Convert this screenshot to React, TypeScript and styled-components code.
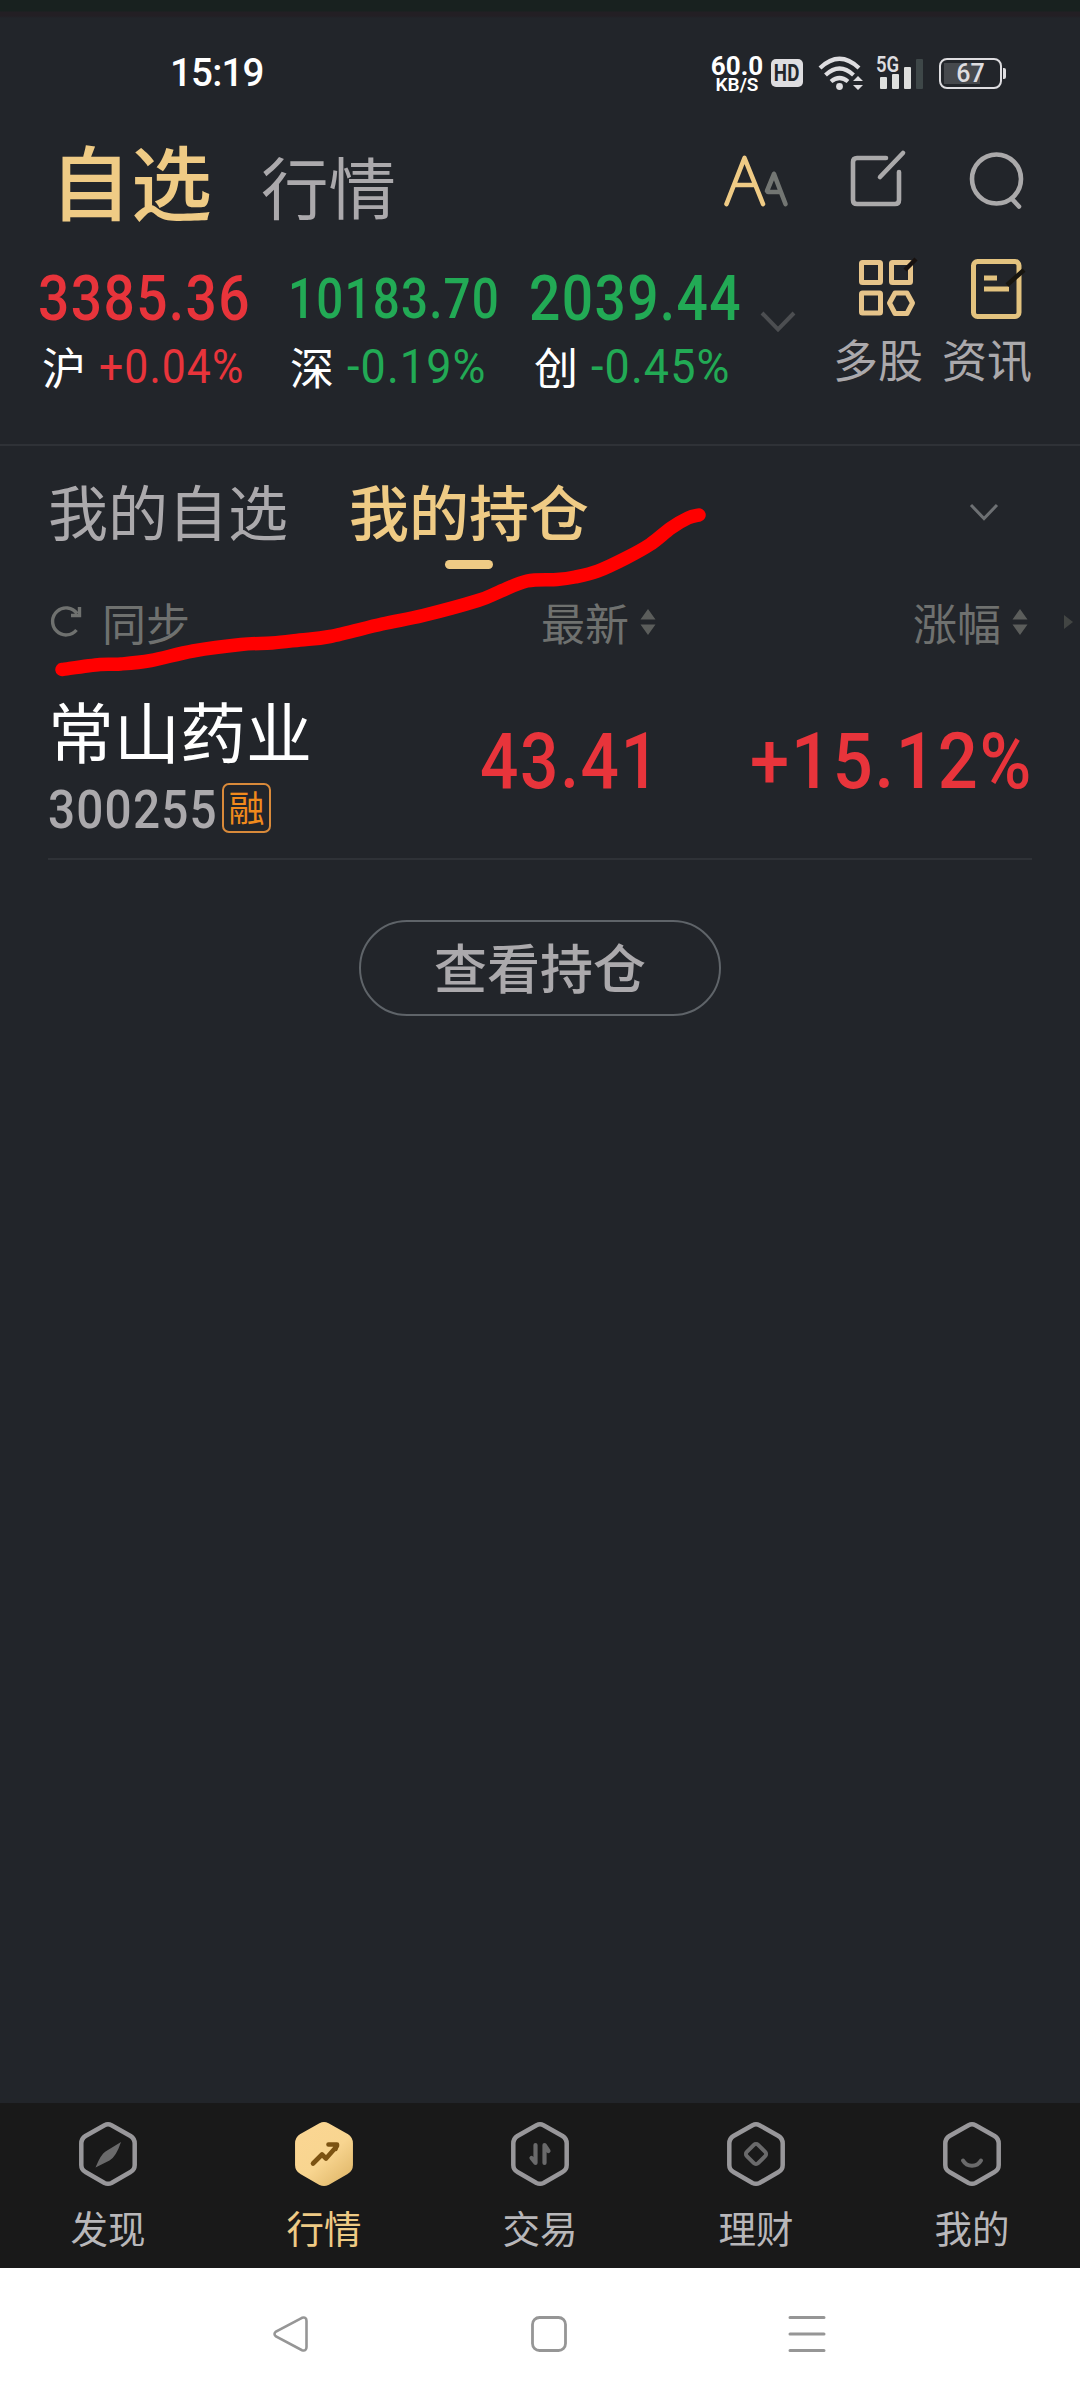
import React from 'react';
import styled, { createGlobalStyle, css } from 'styled-components';

const RED = '#e8343b';
const GREEN = '#22aa55';
const GOLD = '#efcb85';
const GREY = '#aba9ac';
const DIM = '#6f716f';

const GlobalStyle = createGlobalStyle`
  * { box-sizing: border-box; }
  body { margin: 0; background: #22252a; }
`;

const cjk = css`
  font-family: 'Noto Sans CJK SC', 'Noto Sans', sans-serif;
`;

const Screen = styled.div`
  position: relative;
  width: 1080px;
  height: 2400px;
  display: flex;
  flex-direction: column;
  background: #22252a;
  overflow: hidden;
  ${cjk}
`;

/* ---------- shared pieces ---------- */

const Glyph = styled.svg<{ $ml?: number; $mt?: number }>`
  display: block;
  flex: none;
  overflow: visible;
  margin-left: ${(p) => p.$ml ?? 0}px;
  margin-top: ${(p) => p.$mt ?? 0}px;
`;

const Figure = styled.span<{ $size: number; $color: string; $sx?: number; $weight?: number; $line?: number; $ls?: number }>`
  display: block;
  font-family: Roboto, 'Liberation Sans', sans-serif;
  font-size: ${(p) => p.$size}px;
  font-weight: ${(p) => p.$weight ?? 500};
  line-height: ${(p) => p.$line ?? 60}px;
  letter-spacing: ${(p) => p.$ls ?? 0.025}em;
  color: ${(p) => p.$color};
  white-space: nowrap;
  transform: scaleX(${(p) => p.$sx ?? 0.9});
  transform-origin: left center;
`;

/* ---------- status bar ---------- */

const TopEdge = styled.div`
  height: 18px;
  flex: none;
  background: linear-gradient(#18211f 0 11px, #231f24 12px 16px, #22252a 18px);
`;

const StatusBar = styled.div`
  height: 110px;
  flex: none;
  display: flex;
  align-items: center;
  padding: 0 74px 0 170px;
  font-family: Roboto, sans-serif;
`;

const Clock = styled.div`
  width: 539px;
  font-size: 38.5px;
  font-weight: 500;
  line-height: 110px;
  letter-spacing: -0.8px;
  color: #fff;
`;

const NetSpeed = styled.div`
  width: 56px;
  display: flex;
  flex-direction: column;
  align-items: center;
  color: #fff;
  font-weight: 700;
  font-size: 26px;
  line-height: 20px;
  padding-top: 2px;
  small {
    font-size: 19px;
    line-height: 17px;
    font-weight: 600;
  }
`;

const HdBadge = styled.div`
  width: 32px;
  height: 28px;
  margin-left: 6px;
  border-radius: 5px;
  background: #dedde0;
  color: #22252a;
  display: flex;
  align-items: center;
  justify-content: center;
  font-size: 24px;
  font-weight: 700;
  line-height: 28px;
  span { transform: scaleX(0.78); letter-spacing: 0.02em; }
`;

const Signal = styled.div`
  position: relative;
  margin-left: 13px;
`;

const SignalLabel = styled.span`
  position: absolute;
  left: 0;
  top: -2px;
  font-size: 22px;
  line-height: 21px;
  font-weight: 600;
  color: #dedde0;
  transform: scaleX(0.84);
  transform-origin: left;
`;

const Battery = styled.div`
  position: relative;
  width: 63px;
  height: 31px;
  margin-left: 16px;
  border: 2px solid #dedde0;
  border-radius: 8px;
  display: flex;
  align-items: center;
  justify-content: center;
  font-size: 25px;
  font-weight: 500;
  line-height: 31px;
  color: #dedde0;
  background: linear-gradient(#46494d, #46494d) 3px 3px / 36px 21px no-repeat;
  &::after {
    content: '';
    position: absolute;
    right: -6px;
    top: 8px;
    width: 3px;
    height: 11px;
    border-radius: 0 2px 2px 0;
    background: #dedde0;
  }
`;

/* ---------- page header ---------- */

const Header = styled.header`
  height: 110px;
  flex: none;
  display: flex;
  padding-left: 50px;
`;

const Titles = styled.div`
  width: 674px;
  display: flex;
  align-items: baseline;
  gap: 49px;
`;

const Title = styled.div<{ $active?: boolean }>`
  font-size: ${(p) => (p.$active ? 81 : 67.5)}px;
  line-height: 102px;
  color: ${(p) => (p.$active ? GOLD : GREY)};
  font-weight: ${(p) => (p.$active ? 500 : 400)};
`;

/* ---------- indices ---------- */

const Indices = styled.section`
  height: 208px;
  flex: none;
  display: flex;
  padding: 30px 0 0 38px;
  border-bottom: 2px solid #2f3237;
`;

const IndexItem = styled.div<{ $w: number }>`
  width: ${(p) => p.$w}px;
  padding-top: 1px;
`;

const Change = styled.div<{ $pad: number }>`
  display: flex;
  align-items: center;
  height: 56px;
  margin-top: 10px;
  padding-left: ${(p) => p.$pad}px;
`;

const Market = styled.span`
  width: 57px;
  font-size: 44px;
  line-height: 56px;
  margin-top: -2px;
  color: #fff;
`;

const Shortcut = styled.div<{ $ml: number }>`
  width: 90px;
  margin: -9px 0 0 ${(p) => p.$ml}px;
  display: flex;
  flex-direction: column;
  align-items: center;
`;

const ShortcutLabel = styled.span`
  margin-top: auto;
  height: 60px;
  margin-bottom: 55px;
  font-size: 45px;
  line-height: 60px;
  color: ${GREY};
  white-space: nowrap;
`;

/* ---------- list tabs ---------- */

const Tabs = styled.nav`
  height: 130px;
  flex: none;
  display: flex;
  padding: 24px 0 0 48px;
`;

const Tab = styled.div<{ $active?: boolean }>`
  width: 240px;
  margin-right: 61px;
  display: flex;
  flex-direction: column;
  align-items: center;
  font-size: 60px;
  line-height: 80px;
  font-weight: ${(p) => (p.$active ? 500 : 400)};
  color: ${(p) => (p.$active ? GOLD : GREY)};
  &::after {
    content: '';
    width: 48px;
    height: 9px;
    margin-top: 10px;
    border-radius: 5px;
    background: ${(p) => (p.$active ? GOLD : 'transparent')};
  }
`;

const Columns = styled.div`
  height: 92px;
  flex: none;
  display: flex;
  align-items: center;
  padding-left: 51px;
  font-size: 44px;
  line-height: 92px;
  color: ${DIM};
`;

const Column = styled.span<{ $ml: number }>`
  margin-left: ${(p) => p.$ml}px;
  width: 88px;
  white-space: nowrap;
`;

/* ---------- stock row ---------- */

const StockRow = styled.div`
  height: 192px;
  flex: none;
  margin: 0 48px;
  border-bottom: 2px solid #2f3237;
  display: flex;
`;

const Identity = styled.div`
  width: 432px;
  padding: 14px 0 0 0;
`;

const Name = styled.div`
  font-size: 66px;
  line-height: 94px;
  color: #fff;
  white-space: nowrap;
`;

const CodeLine = styled.div`
  display: flex;
  height: 50px;
  margin-top: 7px;
`;

const CodeBox = styled.div`
  width: 174px;
`;

const MarginTag = styled.span`
  width: 49px;
  height: 50px;
  border: 2px solid #d98a3a;
  border-radius: 7px;
  color: #f08a1c;
  font-size: 36px;
  line-height: 43px;
  text-align: center;
`;

const Quote = styled.div<{ $w: number }>`
  width: ${(p) => p.$w}px;
  padding-top: 64px;
`;

const Body = styled.main`
  flex: 1;
  display: flex;
  justify-content: center;
  align-items: flex-start;
  padding-top: 60px;
`;

const ViewButton = styled.button`
  width: 362px;
  height: 96px;
  padding: 0 0 3px;
  border: 2px solid #5f6469;
  border-radius: 48px;
  background: none;
  color: ${GREY};
  ${cjk}
  font-size: 53px;
  font-weight: 500;
  line-height: 89px;
`;

/* ---------- bottom bars ---------- */

const TabBar = styled.nav`
  height: 165px;
  flex: none;
  display: flex;
  background: #191919;
`;

const TabBarItem = styled.div<{ $active?: boolean }>`
  flex: 1;
  display: flex;
  flex-direction: column;
  align-items: center;
  padding-top: 19px;
  font-size: 37.5px;
  line-height: 50px;
  color: ${(p) => (p.$active ? GOLD : '#b8b7ba')};
  span { margin-top: 16px; }
`;

const SystemNav = styled.div`
  height: 132px;
  flex: none;
  background: #fff;
  display: flex;
  align-items: center;
  padding: 0 255px 1px 273px;
  justify-content: space-between;
`;

/* ---------- drawings ---------- */

const SortArrows = ({ ml }: { ml: number }) => (
  <Glyph $ml={ml} $mt={-1} width="16" height="26" viewBox="0 0 16 26" fill="#5b5d5b">
    <path d="M8 0 L15.5 10.5 H0.5 Z M0.5 15.5 H15.5 L8 26 Z" />
  </Glyph>
);

const HEX = 'M25.5 3.2 Q29 1.4 32.500 3.2 L51.500 14 Q55.700 16.700 55.700 21.500 V43 Q55.700 47.800 51.500 50 L32.500 61 Q29 62.700 25.500 61 L6.500 50 Q2.300 47.800 2.300 43 V21.500 Q2.300 16.700 6.500 14 Z';

const HexIcon = ({ filled, children }: { filled?: boolean; children: React.ReactNode }) => (
  <Glyph width="58" height="64" viewBox="0 0 58 64" fill="none">
    <defs>
      <linearGradient id="hexGold" x1="0" y1="0" x2="0.8" y2="1">
        <stop offset="0" stopColor="#fbd693" />
        <stop offset="0.6" stopColor="#f8d590" />
        <stop offset="1" stopColor="#e3bb6e" />
      </linearGradient>
    </defs>
    <path d={HEX} strokeWidth="4.500" stroke={filled ? 'url(#hexGold)' : '#98979a'} fill={filled ? 'url(#hexGold)' : 'none'} />
    {children}
  </Glyph>
);

const strokePoints: [number, number][] = [
  [62, 669.5], [100, 664.5], [121, 664], [151, 660.5], [193, 651], [241, 644.5], [272, 643],
  [300, 640], [330, 636.5], [382, 624], [423, 615.5], [478, 600.5], [499, 592], [527, 581],
  [557, 579.5], [575, 577], [598, 571], [626, 558], [650, 544.5], [671, 528], [688, 518], [699, 515],
];

const smooth = (pts: [number, number][]) =>
  pts.slice(1).reduce((d, p, i) => {
    const a = pts[Math.max(i - 1, 0)];
    const b = pts[i];
    const c = pts[Math.min(i + 2, pts.length - 1)];
    return `${d} C${b[0] + (p[0] - a[0]) / 6} ${b[1] + (p[1] - a[1]) / 6} ${p[0] - (c[0] - b[0]) / 6} ${p[1] - (c[1] - b[1]) / 6} ${p[0]} ${p[1]}`;
  }, `M${pts[0][0]} ${pts[0][1]}`);

const Scribble = styled.svg`
  position: absolute;
  left: 0;
  top: 0;
  pointer-events: none;
`;

const indices = [
  { name: '沪', value: '3385.36', change: '+0.04%', color: RED, size: 63, w: 250, pad: 4, sx: 0.875, csx: 0.9 },
  { name: '深', value: '10183.70', change: '-0.19%', color: GREEN, size: 55, w: 241, pad: 2, sx: 0.865, csx: 0.945 },
  { name: '创', value: '2039.44', change: '-0.45%', color: GREEN, size: 63, w: 232, pad: 5, sx: 0.875, csx: 0.945 },
];

const tabItems = [
  { label: '发现', art: <path d="M42 20 Q37 35 30.500 38.500 L16.500 45.500 Q22 32 26.500 29.500 Z" fill="#6a6a6b" /> },
  { label: '行情', active: true, art: <path d="M18 41.500 L27 32.500 L31 36.500 L42 24 M33.500 22.500 H42 L40.500 27" stroke="#7c5312" strokeWidth="4.600" strokeLinecap="round" strokeLinejoin="round" /> },
  { label: '交易', art: <path d="M24.500 23 V41 L20.500 36 M33.500 41 V23 L37.500 29" stroke="#6a6a6b" strokeWidth="4.200" strokeLinecap="round" strokeLinejoin="round" /> },
  { label: '理财', art: <rect x="21" y="24" width="16" height="16" rx="3" transform="rotate(45 29 32)" stroke="#6a6a6b" strokeWidth="4" /> },
  { label: '我的', art: <path d="M20 38.500 C24 45.500 34 45.500 38 38.500" stroke="#6a6a6b" strokeWidth="4" strokeLinecap="round" /> },
];

export default function App() {
  return (
    <Screen>
      <GlobalStyle />
      <TopEdge />
      <StatusBar>
        <Clock>15:19</Clock>
        <NetSpeed>60.0<small>KB/S</small></NetSpeed>
        <HdBadge><span>HD</span></HdBadge>
        <Glyph $ml={16} width="44" height="34" viewBox="819 54 44 34" fill="none" stroke="#dedde0" strokeWidth="4.200">
          <path d="M820 66 Q839.500 47.500 859 66 M825.500 73 Q839.500 60 853.500 73 M831 79.500 Q839.500 72.500 848 79.500" />
          <circle cx="839.500" cy="84.500" r="3.400" fill="#dedde0" stroke="none" />
          <path d="M853 79 L858 74 L863 79 Z M853 83 H863 L858 88 Z" fill="#dedde0" stroke="none" />
        </Glyph>
        <Signal>
          <Glyph width="47" height="34" viewBox="876 54 47 34" fill="#dedfdd">
            <rect x="880" y="75" width="7" height="12" rx="1" />
            <rect x="892" y="72" width="7" height="15" rx="1" />
            <rect x="904" y="65" width="7" height="22" rx="1" />
            <rect x="916" y="57" width="7" height="30" rx="1" fill="#3e4748" />
          </Glyph>
          <SignalLabel>5G</SignalLabel>
        </Signal>
        <Battery>67</Battery>
      </StatusBar>

      <Header>
        <Titles>
          <Title $active>自选</Title>
          <Title>行情</Title>
        </Titles>
        <Glyph $mt={27} width="64" height="52" viewBox="0 0 64 52" fill="none" strokeWidth="4.600" strokeLinecap="round" strokeLinejoin="round">
          <path d="M50 19 L61.500 49 M50 19 L43 36 M44 37 H56" stroke="#737673" />
          <path d="M2.500 49 L20.500 3 L39 49 M10 30 H31" stroke={GOLD} />
        </Glyph>
        <Glyph $ml={62} $mt={23} width="56" height="56" viewBox="0 0 56 56" fill="none" stroke="#aaa9aa" strokeWidth="4.600" strokeLinecap="round">
          <path d="M36 7 H7 Q3 7 3 11 V49 Q3 53 7 53 H45 Q49 53 49 49 V21 M53 2 L30 26" />
        </Glyph>
        <Glyph $ml={64} $mt={24} width="54" height="58" viewBox="0 0 54 58" fill="none" stroke="#aaa9aa" strokeWidth="4.600" strokeLinecap="round">
          <circle cx="26.500" cy="27" r="24.500" />
          <path d="M42 47 L49 54.500" />
        </Glyph>
      </Header>

      <Indices>
        {indices.map((i) => (
          <IndexItem key={i.name} $w={i.w}>
            <Figure $size={i.size} $color={i.color} $sx={i.sx}>{i.value}</Figure>
            <Change $pad={i.pad}>
              <Market>{i.name}</Market>
              <Figure $size={47.5} $color={i.color} $weight={400} $sx={i.csx}>{i.change}</Figure>
            </Change>
          </IndexItem>
        ))}
        <Glyph $mt={44} width="34" height="20" viewBox="0 0 34 20" fill="none" stroke="#4c4e51" strokeWidth="4">
          <path d="M1 1 L17 17.500 L33 1" />
        </Glyph>
        <Shortcut $ml={38}>
          <Glyph $ml={17} $mt={1} width="56" height="56" viewBox="0 0 56 56" fill="none" stroke="#e6c48a" strokeWidth="5">
            <rect x="2.500" y="2.500" width="19" height="20" rx="1" />
            <rect x="32.500" y="2.500" width="19" height="20" rx="1" />
            <rect x="2.500" y="33" width="19" height="20" rx="1" />
            <path d="M36 33 H48 L53.500 43 L48 53.500 H36 L30.500 43 Z" strokeLinejoin="round" />
            <path d="M46 10 L57 -1" stroke="#17110f" strokeWidth="4.500" />
          </Glyph>
          <ShortcutLabel>多股</ShortcutLabel>
        </Shortcut>
        <Shortcut $ml={19}>
          <Glyph $ml={18} width="51" height="60" viewBox="0 0 51 60" fill="none" stroke="#e3c37f" strokeWidth="5">
            <rect x="2.500" y="2.500" width="45.500" height="55" rx="4" />
            <path d="M13 19 H26 M13 30 H38" />
            <path d="M36 26 L53 11" stroke="#17150f" strokeWidth="4.500" />
          </Glyph>
          <ShortcutLabel>资讯</ShortcutLabel>
        </Shortcut>
      </Indices>

      <Tabs>
        <Tab>我的自选</Tab>
        <Tab $active>我的持仓</Tab>
        <Glyph $ml={320} $mt={34} width="28" height="17" viewBox="0 0 28 17" fill="none" stroke="#6d7073" strokeWidth="3">
          <path d="M1 1 L14 14.500 L27 1" />
        </Glyph>
      </Tabs>

      <Columns>
        <Glyph $mt={-4} width="30" height="31" viewBox="0 0 30 31" fill="none" stroke={DIM} strokeWidth="3.400">
          <path d="M25.500 25 A13.500 13.500 0 1 1 26 8.500 M28.500 2 V10.500 H20" />
        </Glyph>
        <Column $ml={21}>同步</Column>
        <Column $ml={351}>最新</Column>
        <SortArrows ml={11} />
        <Column $ml={257}>涨幅</Column>
        <SortArrows ml={11} />
        <Glyph $ml={36} width="9" height="14" viewBox="0 0 9 14" fill="#424543"><path d="M0 0 L9 7 L0 14 Z" /></Glyph>
      </Columns>

      <StockRow>
        <Identity>
          <Name>常山药业</Name>
          <CodeLine>
            <CodeBox><Figure $size={53} $color={GREY} $line={54}>300255</Figure></CodeBox>
            <MarginTag>融</MarginTag>
          </CodeLine>
        </Identity>
        <Quote $w={270}><Figure $size={77} $color={RED} $line={60} $sx={0.877}>43.41</Figure></Quote>
        <Quote $w={282}><Figure $size={77} $color={RED} $line={60} $sx={0.915}>+15.12%</Figure></Quote>
      </StockRow>

      <Body>
        <ViewButton>查看持仓</ViewButton>
      </Body>

      <TabBar>
        {tabItems.map((t) => (
          <TabBarItem key={t.label} $active={t.active}>
            <HexIcon filled={t.active}>{t.art}</HexIcon>
            <span>{t.label}</span>
          </TabBarItem>
        ))}
      </TabBar>

      <SystemNav>
        <Glyph width="36" height="36" viewBox="0 0 36 36" fill="none" stroke="#969696" strokeWidth="2.600">
          <path d="M29 1.800 L3 15.500 Q0 18 3 20.500 L29 34.200 Q33.500 35.500 33.500 31 V5 Q33.500 0.500 29 1.800 Z" />
        </Glyph>
        <Glyph width="36" height="36" viewBox="0 0 36 36" fill="none" stroke="#969696" strokeWidth="2.800">
          <rect x="1.500" y="1.500" width="33" height="33" rx="7" />
        </Glyph>
        <Glyph width="36" height="36" viewBox="0 0 36 36" stroke="#969696" strokeWidth="3" strokeLinecap="round">
          <path d="M1 1.500 H35 M1 18 H35 M1 34.500 H35" />
        </Glyph>
      </SystemNav>

      <Scribble width="1080" height="700" fill="none">
        <path d={smooth(strokePoints)} stroke="#ff0000" strokeWidth="13.500" strokeLinecap="round" strokeLinejoin="round" />
      </Scribble>
    </Screen>
  );
}
